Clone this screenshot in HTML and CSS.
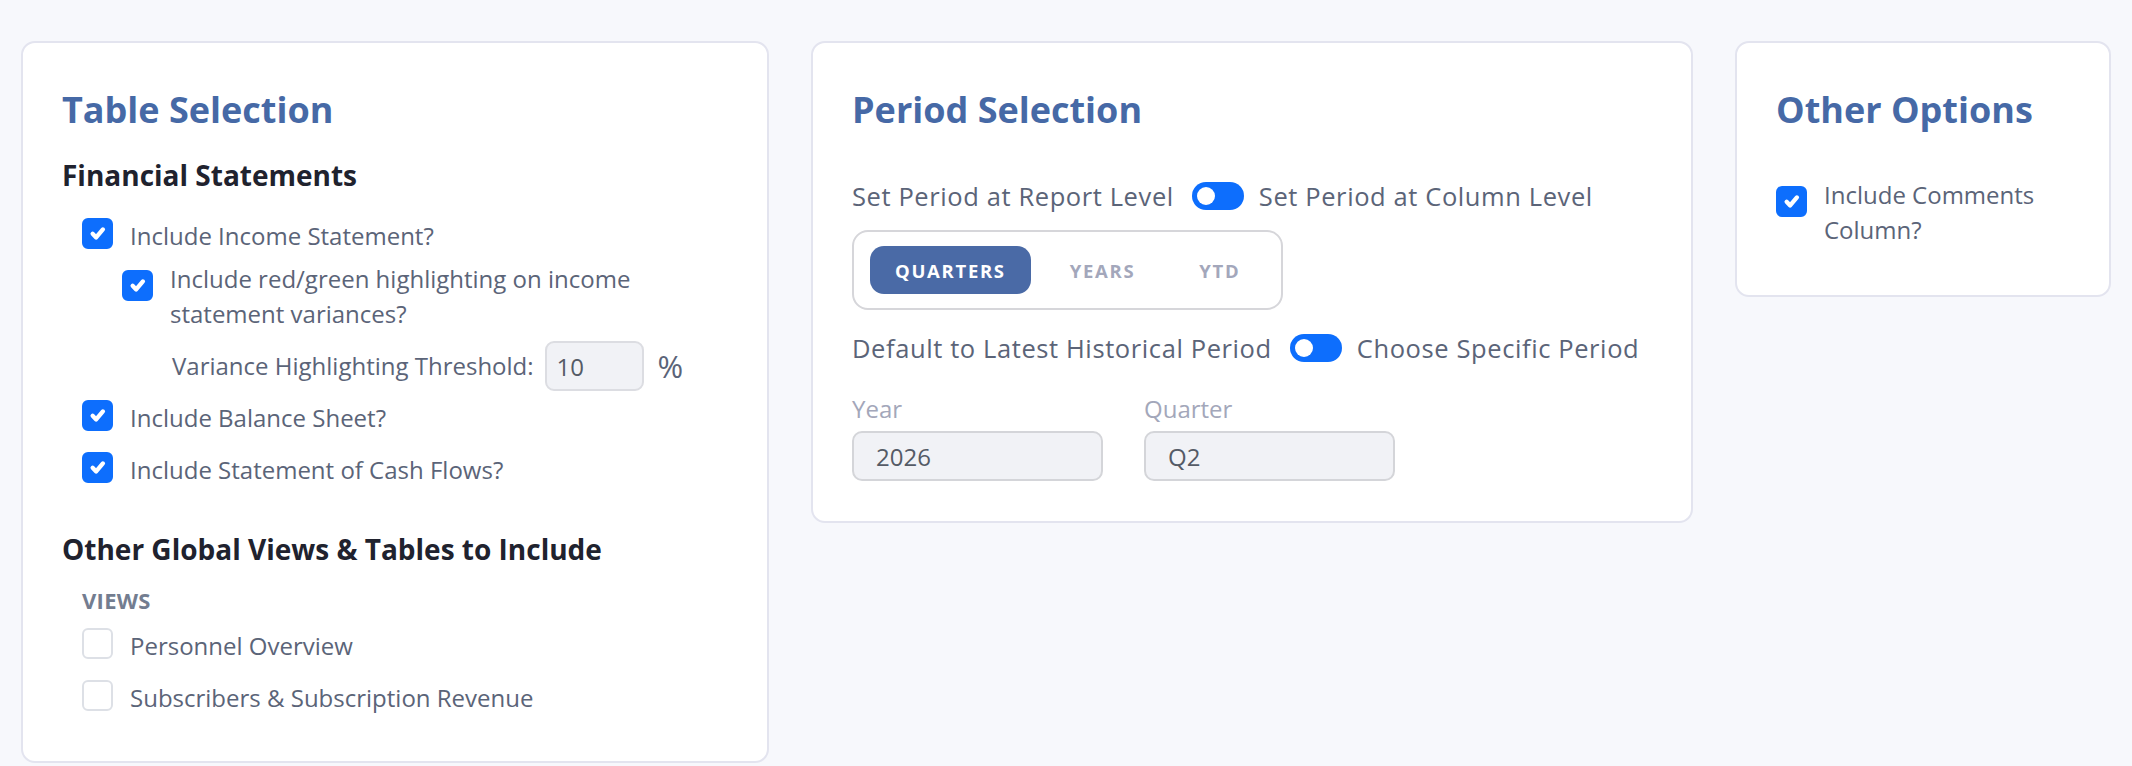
FILE: index.html
```html
<!DOCTYPE html>
<html lang="en">
<head>
  <meta charset="UTF-8" />
  <meta name="viewport" content="width=device-width, initial-scale=1" />
  <title>Report Options</title>
  <link rel="stylesheet" href="styles.css">
</head>
<body>
  <main class="options">

    <section class="card">
      <h2 class="card-title">Table Selection</h2>
      <h3 class="group-title">Financial Statements</h3>

      <label class="check">
        <span class="box checked"><svg viewBox="0 0 20 20"><path d="M6.4 10.2L9 12.9L14 7"/></svg></span>
        <span class="check-text">Include Income Statement?</span>
      </label>
      <label class="check nested multi">
        <span class="box checked"><svg viewBox="0 0 20 20"><path d="M6.4 10.2L9 12.9L14 7"/></svg></span>
        <span class="check-text narrow">Include red/green highlighting on income statement variances?</span>
      </label>
      <div class="threshold">
        <span>Variance Highlighting Threshold:</span>
        <input class="threshold-input" type="text" value="10">
        <span class="percent">%</span>
      </div>
      <label class="check">
        <span class="box checked"><svg viewBox="0 0 20 20"><path d="M6.4 10.2L9 12.9L14 7"/></svg></span>
        <span class="check-text">Include Balance Sheet?</span>
      </label>
      <label class="check last">
        <span class="box checked"><svg viewBox="0 0 20 20"><path d="M6.4 10.2L9 12.9L14 7"/></svg></span>
        <span class="check-text">Include Statement of Cash Flows?</span>
      </label>

      <h3 class="group-title spaced">Other Global Views &amp; Tables to Include</h3>
      <div class="views-label">Views</div>
      <label class="check">
        <span class="box"></span>
        <span class="check-text">Personnel Overview</span>
      </label>
      <label class="check last">
        <span class="box"></span>
        <span class="check-text">Subscribers &amp; Subscription Revenue</span>
      </label>
    </section>

    <section class="card period-card">
      <h2 class="card-title">Period Selection</h2>

      <div class="switch-row">
        <span>Set Period at Report Level</span>
        <span class="switch"></span>
        <span>Set Period at Column Level</span>
      </div>

      <div class="segmented">
        <button class="segment active">Quarters</button>
        <button class="segment">Years</button>
        <button class="segment">YTD</button>
      </div>

      <div class="switch-row second">
        <span>Default to Latest Historical Period</span>
        <span class="switch"></span>
        <span>Choose Specific Period</span>
      </div>

      <div class="fields">
        <div class="field">
          <label>Year</label>
          <input class="field-input" type="text" value="2026">
        </div>
        <div class="field">
          <label>Quarter</label>
          <input class="field-input" type="text" value="Q2">
        </div>
      </div>
    </section>

    <section class="card other-card">
      <h2 class="card-title">Other Options</h2>
      <label class="check multi">
        <span class="box checked"><svg viewBox="0 0 20 20"><path d="M6.4 10.2L9 12.9L14 7"/></svg></span>
        <span class="check-text">Include Comments Column?</span>
      </label>
    </section>

  </main>
</body>
</html>
```

FILE: styles.css
```css
body {
  margin: 0;
  background: #f7f8fc;
  font-family: 'Open Sans', 'Liberation Sans', sans-serif;
  font-size: 24px;
  line-height: 36px;
  color: #5b6478;
}

.options {
  display: grid;
  grid-template-columns: 748px 882px 376px;
  gap: 42px;
  align-items: start;
  padding: 41px 21px;
}

.card {
  background: #fff;
  border: 2px solid #e3e4ef;
  border-radius: 14px;
  padding: 45px 39px;
}
.card-title {
  margin: 0;
  font-size: 36px;
  line-height: 44px;
  font-weight: 700;
  color: #4669a6;
}
.group-title {
  margin: 25px 0;
  font-size: 28px;
  line-height: 36px;
  font-weight: 700;
  color: #20222e;
}
.group-title.spaced {
  margin-top: 43px;
  margin-bottom: 18px;
}

/* Checkboxes */
.check {
  display: flex;
  align-items: flex-start;
  gap: 17px;
  margin: 0 0 16px 20px;
}
.check.last {
  margin-bottom: 0;
}
.check.nested {
  margin: -9px 0 0 60px;
}
/* labels that wrap sit higher than the box */
.check.multi .box {
  margin-top: 9px;
}
.check.multi .check-text {
  line-height: 35px;
}
.check-text.narrow {
  max-width: 500px;
}
.box {
  flex: none;
  width: 31px;
  height: 31px;
  box-sizing: border-box;
  border: 2px solid #dde0e6;
  border-radius: 6px;
  background: #fff;
}
.box.checked {
  background: #0d6efd;
  border-color: #0d6efd;
}
.box svg {
  display: block;
  width: 27px;
  height: 27px;
}
.box svg path {
  fill: none;
  stroke: #fff;
  stroke-width: 3.2;
  stroke-linecap: round;
  stroke-linejoin: round;
}

.threshold {
  display: flex;
  align-items: center;
  height: 50px;
  margin: 10px 0 9px 110px;
}
.threshold-input {
  width: 99px;
  height: 50px;
  box-sizing: border-box;
  margin: 0 14px 0 11px;
  padding: 0 10px;
  border: 2px solid #dcdde2;
  border-radius: 9px;
  background: #f1f2f6;
  font: inherit;
  color: #555b66;
}
.percent {
  font-size: 31px;
}

.views-label {
  margin: 0 0 13px 20px;
  font-size: 22px;
  line-height: 30px;
  font-weight: 700;
  letter-spacing: 0.3px;
  color: #737d90;
  text-transform: uppercase;
}

/* Period card */
.period-card {
  padding-bottom: 40px;
}
.switch-row {
  display: flex;
  align-items: center;
  margin-top: 46px;
  font-size: 25.5px;
  letter-spacing: 0.6px;
}
.switch-row.second {
  margin-top: 20px;
}
.switch {
  position: relative;
  flex: none;
  width: 52px;
  height: 28px;
  margin: 0 15px 0 18px;
  border-radius: 14px;
  background: #0d6efd;
}
.switch::after {
  content: '';
  position: absolute;
  left: 5px;
  top: 5px;
  width: 18px;
  height: 18px;
  border-radius: 50%;
  background: #fff;
}

.segmented {
  display: inline-flex;
  gap: 14px;
  margin-top: 16px;
  padding: 14px 16px;
  border: 2px solid #d6d6da;
  border-radius: 16px;
}
.segment {
  height: 48px;
  padding: 0 25px;
  border: none;
  border-radius: 14px;
  background: none;
  font-family: inherit;
  font-size: 18.5px;
  font-weight: 700;
  letter-spacing: 1.7px;
  text-transform: uppercase;
  color: #a3a7bb;
  cursor: pointer;
}
.segment.active {
  background: #4a6aa6;
  color: #fff;
}

.fields {
  display: flex;
  gap: 41px;
  margin-top: 25px;
}
.field label {
  display: block;
  color: #a3a7ba;
}
.field-input {
  display: block;
  width: 251px;
  height: 50px;
  box-sizing: border-box;
  margin-top: 4px;
  padding: 0 22px;
  border: 2px solid #d4d5d9;
  border-radius: 10px;
  background: #f1f2f6;
  font: inherit;
  color: #555b66;
}

/* Other options card */
.other-card {
  padding-bottom: 48px;
}
.other-card .check {
  margin: 45px 0 0 0;
}
```
